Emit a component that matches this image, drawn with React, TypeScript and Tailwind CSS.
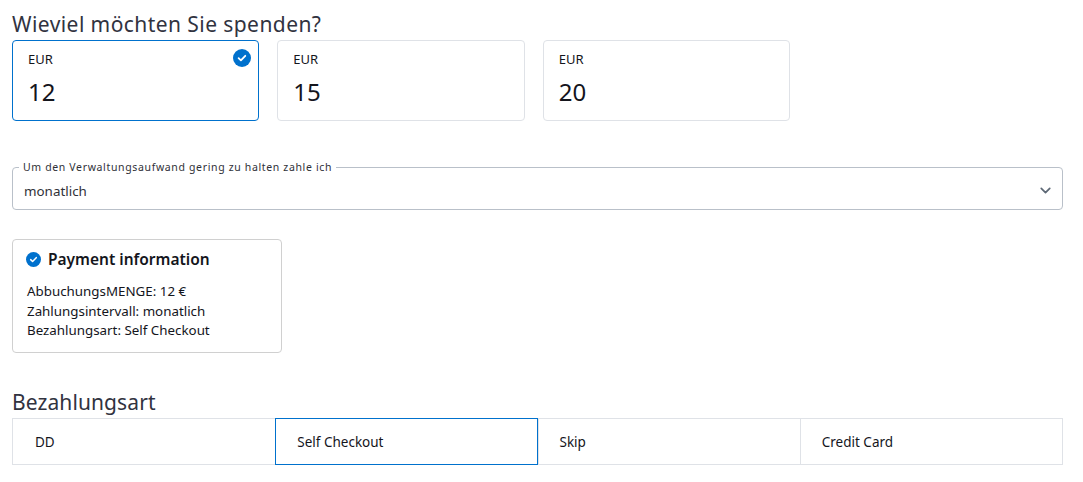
import { ChevronDown } from "lucide-react";

const AMOUNTS = [12, 15, 20];
const METHODS = ["DD", "Self Checkout", "Skip", "Credit Card"];
const SELECTED_METHOD = "Self Checkout";

function CheckBadge({ className }: { className: string }) {
  return (
    <svg viewBox="0 0 18 18" className={className}>
      <circle cx="9" cy="9" r="9" fill="#0071cd" />
      <path d="M5.6 9.2l2.3 2.2 4.4-4.6" fill="none" stroke="#fff" strokeWidth="1.8" strokeLinecap="round" strokeLinejoin="round" />
    </svg>
  );
}

export default function App() {
  return (
    <div className="w-[1083px] h-[482px] bg-white overflow-hidden pl-3 pr-5 pt-[9px] font-['Noto_Sans',sans-serif] text-[#14151c]">
      <h2 className="pb-px text-[21px] leading-[30px] tracking-[0.43px] text-[#31333f]">Wieviel möchten Sie spenden?</h2>

      <div className="flex gap-[18px]">
        {AMOUNTS.map((amount) => (
          <div
            key={amount}
            className={`relative w-[247.33px] h-[81px] rounded-[4px] border px-[15px] pt-[9px] ${
              amount === 12 ? "border-[#0071cd]" : "border-[#dfe2e7]"
            }`}
          >
            <div className="text-[13px] leading-[18px]">EUR</div>
            <div className="mt-[8px] text-[24px] leading-[32px]">{amount}</div>
            {amount === 12 && <CheckBadge className="absolute top-[8px] right-[7px] w-[18px] h-[18px]" />}
          </div>
        ))}
      </div>

      <fieldset className="mt-[39px] h-[50px] rounded-[4px] border border-[#b9c0c9] pl-[6px] pr-[10px] relative">
        <legend className="px-[4px] text-[10.5px] leading-[14px] tracking-[0.65px] text-[#2f3138]">
          Um den Verwaltungsaufwand gering zu halten zahle ich
        </legend>
        <div className="pl-[5px] pt-[8px] text-[13.4px] leading-[18px] text-[#2f3138]">monatlich</div>
        <ChevronDown className="absolute right-[8px] top-[8px] w-[17px] h-[17px] text-[#5d6875]" strokeWidth={2.4} />
      </fieldset>

      <div className="mt-[29px] w-[270px] h-[114px] rounded-[4px] border border-[#d0d0d0] px-[14px] pt-[7px]">
        <div className="flex items-center gap-[7px]">
          <CheckBadge className="-ml-px w-[15px] h-[15px]" />
          <span className="text-[15.5px] leading-[24px] font-semibold">Payment information</span>
        </div>
        <div className="mt-[11px] text-[13.35px] leading-[19.5px]">
          <p>AbbuchungsMENGE: 12 €</p>
          <p>Zahlungsintervall: monatlich</p>
          <p>Bezahlungsart: Self Checkout</p>
        </div>
      </div>

      <h2 className="mt-[34px] pb-px text-[21px] leading-[30px] tracking-[0.1px] text-[#31333f]">Bezahlungsart</h2>

      <div className="grid grid-cols-4 h-[47px] border border-[#dfe2e7]">
        {METHODS.map((method, i) => (
          <div
            key={method}
            className={`flex items-center pl-[21px] pt-[1px] text-[13.5px] ${
              method === SELECTED_METHOD
                ? "-my-px border border-[#0071cd]"
                : i > 0
                  ? "border-l border-[#dfe2e7]"
                  : "pl-[22px]"
            }`}
          >
            {method}
          </div>
        ))}
      </div>
    </div>
  );
}
